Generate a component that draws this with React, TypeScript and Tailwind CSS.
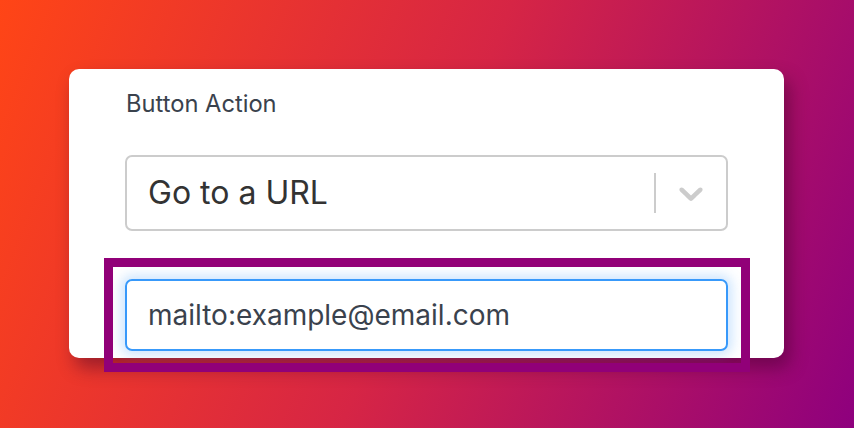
import React from 'react';

const Chevron: React.FC = () => (
  <svg viewBox="0 0 20 20" className="w-[40px] h-[40px] fill-[#cccccc]">
    <path d="M4.516 7.548c0.436-0.446 1.043-0.481 1.576 0l3.908 3.747 3.908-3.747c0.533-0.481 1.141-0.446 1.574 0 0.436 0.445 0.408 1.197 0 1.615-0.406 0.418-4.695 4.502-4.695 4.502-0.217 0.223-0.502 0.335-0.787 0.335s-0.57-0.112-0.789-0.335c0 0-4.287-4.084-4.695-4.502s-0.436-1.17 0-1.615z" />
  </svg>
);

export default function App() {
  return (
    <div
      className="relative w-[854px] h-[428px] overflow-hidden bg-[linear-gradient(112deg,#ff4516_0%,#d62545_50%,#8e007e_100%)] pt-[69px] pl-[69px]"
      style={{ fontFamily: 'Inter, "Noto Sans", sans-serif' }}
    >
      {/* Card */}
      <div className="w-[715px] h-[289px] bg-white rounded-[10px] shadow-[6px_10px_18px_rgba(60,0,40,0.45)] pt-[21px] px-[56px]">
        <div className="text-[23.7px] leading-[28px] text-[#3a424d] pl-[1px]">Button Action</div>

        <div className="mt-[37px] h-[76px] flex items-center border-2 border-[#cccccc] rounded-[7px]">
          <div className="flex-1 pl-[21px] text-[32px] text-[#333333]">Go to a URL</div>
          <div className="w-[2px] h-[40px] bg-[#cccccc]" />
          <div className="px-[15px] flex items-center">
            <Chevron />
          </div>
        </div>

        <div className="mt-[48px] h-[72px] flex items-center border-2 border-[#3899fa] rounded-[7px] shadow-[0_0_12px_4px_rgba(56,153,250,0.25)] pl-[21px] text-[28px] text-[#3a424d]">
          mailto:example@email.com
        </div>
      </div>

      {/* Highlight frame over the input */}
      <div className="absolute left-[104px] top-[258px] w-[646px] h-[114px] border-[9px] border-[#910078] pointer-events-none" />
    </div>
  );
}
